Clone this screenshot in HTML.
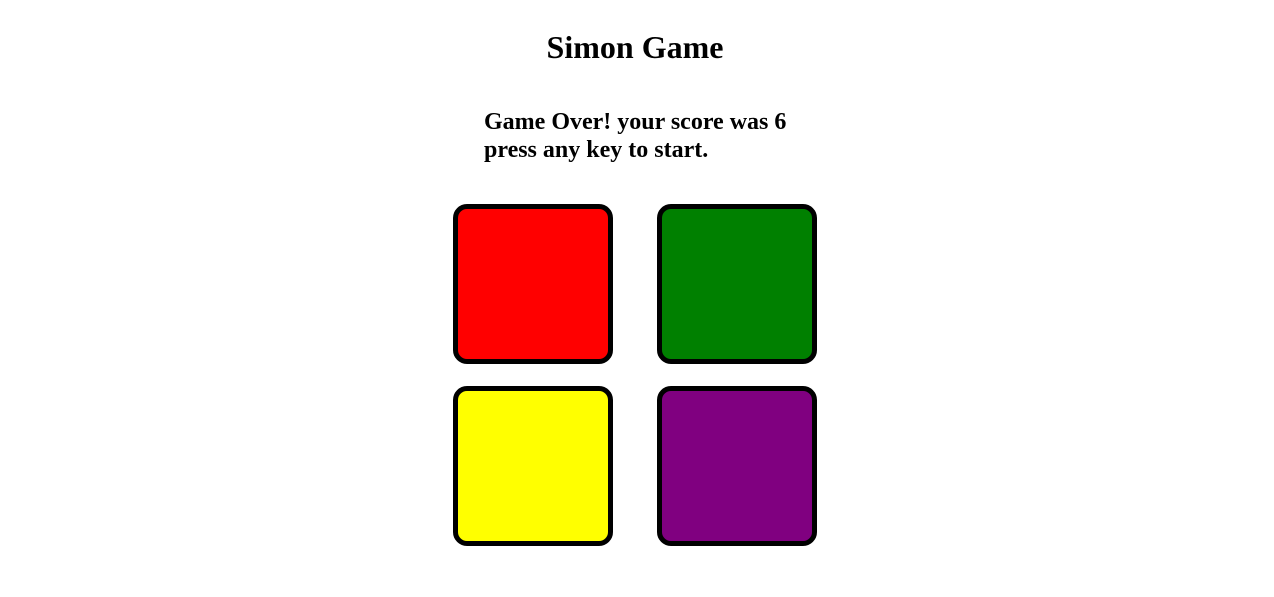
<!DOCTYPE html>
<html><head><style>
body{margin:0;background:#fff;font-family:"Liberation Serif",serif;}
h1{position:absolute;left:0;width:1270px;top:29px;margin:0;text-align:center;font-size:32px;font-weight:bold;line-height:37px;}
.t{position:absolute;left:484px;top:108px;font-size:24px;font-weight:bold;line-height:28px;margin:0;}
.b{position:absolute;width:150px;height:150px;border:5px solid #000;border-radius:14px;}
</style></head><body>
<h1>Simon Game</h1>
<p class="t">Game Over! your score was 6<br>press any key to start.</p>
<div class="b" style="left:453px;top:204px;background:red"></div>
<div class="b" style="left:657px;top:204px;background:green"></div>
<div class="b" style="left:453px;top:386px;background:yellow"></div>
<div class="b" style="left:657px;top:386px;background:purple"></div>
</body></html>
